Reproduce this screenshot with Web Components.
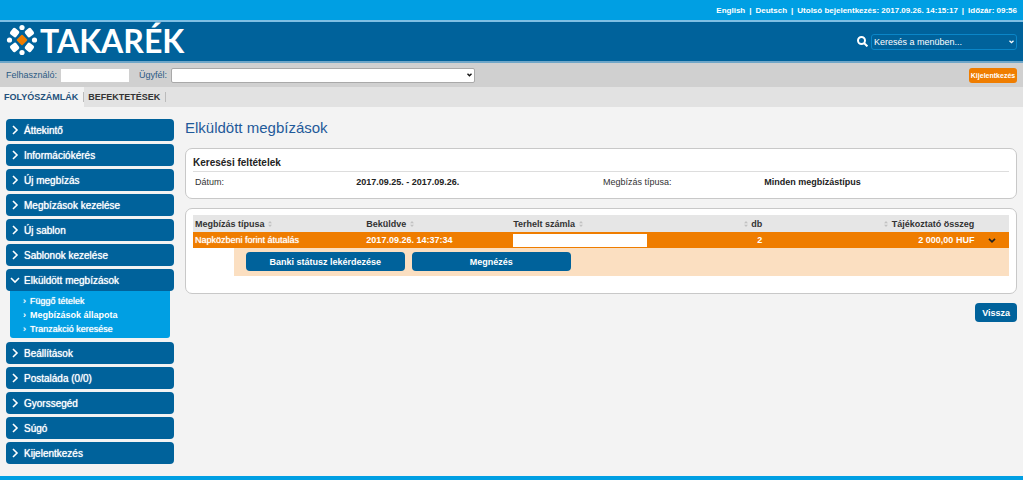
<!DOCTYPE html>
<html lang="hu">
<head>
<meta charset="utf-8">
<title>Takarék – Elküldött megbízások</title>
<style>
html, body { margin: 0; }
body { background: #f3f3f3; color: #333; font-family: "Liberation Sans", Arial, sans-serif; font-size: 9px;
  --navy: #00629b; --sky: #009fe3; --orange: #ef7d00; }
</style>
</head>
<body>
<bank-page>
  <top-bar slot="header"></top-bar>
  <brand-bar slot="header"></brand-bar>
  <client-bar slot="header"></client-bar>
  <tab-bar slot="header"></tab-bar>
  <side-menu slot="menu">
    <menu-item>Áttekintő</menu-item>
    <menu-item>Információkérés</menu-item>
    <menu-item>Új megbízás</menu-item>
    <menu-item>Megbízások kezelése</menu-item>
    <menu-item>Új sablon</menu-item>
    <menu-item>Sablonok kezelése</menu-item>
    <menu-item open>Elküldött megbízások
      <sub-item slot="sub">Függő tételek</sub-item>
      <sub-item slot="sub" current>Megbízások állapota</sub-item>
      <sub-item slot="sub">Tranzakció keresése</sub-item>
    </menu-item>
    <menu-item>Beállítások</menu-item>
    <menu-item>Postaláda (0/0)</menu-item>
    <menu-item>Gyorssegéd</menu-item>
    <menu-item>Súgó</menu-item>
    <menu-item>Kijelentkezés</menu-item>
  </side-menu>
  <page-title>Elküldött megbízások</page-title>
  <panel-card><search-criteria></search-criteria></panel-card>
  <panel-card><order-table></order-table></panel-card>
  <page-actions><action-button>Vissza</action-button></page-actions>
</bank-page>

<script>
function define(name, html) {
  const template = document.createElement('template');
  template.innerHTML = html;
  customElements.define(name, class extends HTMLElement {
    constructor() {
      super();
      this.attachShadow({ mode: 'open' }).append(template.content.cloneNode(true));
    }
  });
}

define('bank-page', `
<style>
:host { display: flex; flex-direction: column; min-height: 100vh; }
.body { flex: 1; display: grid; grid-template-columns: 168px minmax(0, 1fr); gap: 11px; padding: 12px 6px; }
main { display: flex; flex-direction: column; gap: 9px; }
footer { height: 4px; background: var(--sky); }
</style>
<header><slot name="header"></slot></header>
<div class="body"><slot name="menu"></slot><main><slot></slot></main></div>
<footer></footer>`);

define('top-bar', `
<style>
:host { display: flex; justify-content: flex-end; align-items: center; gap: 4px; height: 20px; padding: 0 6px;
  background: var(--sky); color: #fff; font-weight: bold; font-size: 8px; }
a { color: inherit; text-decoration: none; }
</style>
<a href="#en">English</a><span>|</span><a href="#de">Deutsch</a><span>|</span><span>Utolsó bejelentkezés: 2017.09.26. 14:15:17</span><span>|</span><span>Időzár: 09:56</span>`);

define('brand-bar', `
<style>
:host { display: flex; justify-content: space-between; align-items: center; height: 39px; padding: 0 6px;
  background: var(--navy); border-top: 2px solid #7fbfe4; border-bottom: 2px solid #6fa6c8; }
.logo { display: flex; align-items: center; gap: 2px; color: #fff; text-decoration: none; font: bold 32px/36px Lato, sans-serif; }
.logo svg { width: 32px; height: 32px; padding-bottom: 3px; }
.logo span { padding-bottom: 2px; }
.search { display: flex; align-items: center; gap: 3px; }
.search svg { width: 11px; height: 11px; }
.box { display: grid; align-items: center; }
select { grid-area: 1/1; appearance: none; width: 146px; height: 16px; padding: 0 2px; margin: 0; border: 1px solid #0a86c8; border-radius: 3px;
  background: transparent; color: #fff; font: 9px "Liberation Sans", Arial, sans-serif; }
.search .box svg { grid-area: 1/1; justify-self: end; width: 5px; height: 4px; margin-right: 3px; pointer-events: none; }
</style>
<a class="logo" href="#home">
<svg viewBox="0 0 32 32" fill="#fff" aria-hidden="true">
<rect x="12" y="12" width="8" height="8" rx="1" transform="rotate(45 16 16)" fill="#ef7d00"/>
<g id="petals">
<rect x="4.700" y="4.700" width="7.800" height="7.800" rx="2" transform="rotate(38 8.600 8.600)"/>
<rect x="19.500" y="4.700" width="7.800" height="7.800" rx="2" transform="rotate(-38 23.400 8.600)"/>
<rect x="4.700" y="19.500" width="7.800" height="7.800" rx="2" transform="rotate(-38 8.600 23.400)"/>
<rect x="19.500" y="19.500" width="7.800" height="7.800" rx="2" transform="rotate(38 23.400 23.400)"/>
</g>
<circle cx="16" cy="3.500" r="2.600"/><circle cx="16" cy="28.500" r="2.600"/><circle cx="3.500" cy="16" r="2.600"/><circle cx="28.500" cy="16" r="2.600"/>
</svg><span>TAKARÉK</span></a>
<div class="search">
<svg viewBox="0 0 11 11" fill="none" stroke="#fff" stroke-width="2" aria-hidden="true"><circle cx="4.500" cy="4.500" r="3.500"/><path d="M7 7l3.400 3.400"/></svg>
<div class="box"><select aria-label="Keresés a menüben"><option>Keresés a menüben...</option></select>
<svg viewBox="0 0 5 4" fill="none" stroke="#fff" stroke-width="1.300" aria-hidden="true"><path d="M.5 .7l2 2 2-2"/></svg></div>
</div>`);

define('client-bar', `
<style>
:host { display: flex; align-items: center; gap: 10px; height: 24px; padding: 0 6px; background: #d0d0d0; color: #2b5a84; }
label { display: flex; align-items: center; gap: 4px; }
input { box-sizing: border-box; width: 68px; height: 13px; margin: 0; padding: 0 2px; border: 0; background: #fff; font: inherit; }
.box { display: grid; align-items: center; }
select { grid-area: 1/1; box-sizing: border-box; appearance: none; width: 304px; height: 15px; margin: 0; border: 1px solid #a9a9a9; border-radius: 2px; background: #fff; font: inherit; }
svg { grid-area: 1/1; justify-self: end; width: 5px; height: 4px; margin-right: 3px; pointer-events: none; }
button { margin: 0 0 0 auto; width: 48px; height: 15px; padding: 0; border: 0; border-radius: 3px; background: var(--orange); color: #fff;
  font: bold 7px "Liberation Sans", Arial, sans-serif; }
</style>
<label>Felhasználó: <input type="text"></label>
<label>Ügyfél: <span class="box"><select><option></option></select>
<svg viewBox="0 0 5 4" fill="none" stroke="#111" stroke-width="1.400" aria-hidden="true"><path d="M.5 .7l2 2 2-2"/></svg></span></label>
<button type="button">Kijelentkezés</button>`);

define('tab-bar', `
<style>
:host { display: flex; height: 20px; background: #e2e2e2; font-weight: bold; line-height: 20px; }
a { padding: 0 6px 0 4px; color: #333; text-decoration: none; background: linear-gradient(#bbb, #bbb) right center / 1px 10px no-repeat; }
a[aria-current] { background-color: #f3f3f3; color: #24517b; }
</style>
<a href="#accounts" aria-current="page">FOLYÓSZÁMLÁK</a><a href="#investments">BEFEKTETÉSEK</a>`);

define('side-menu', `
<style>:host { display: flex; flex-direction: column; gap: 3px; }</style>
<slot></slot>`);

define('menu-item', `
<style>
:host { display: block; }
a { display: flex; align-items: center; gap: 6px; height: 22px; padding: 0 6px; border-radius: 4px; background: var(--navy); color: #fff;
  text-decoration: none; font-size: 10px; text-shadow: 0 0 1px #fff; }
svg { width: 6px; height: 8px; flex: none; overflow: visible; }
:host([open]) svg { transform: rotate(90deg); }
.sub { display: none; }
:host([open]) .sub { display: block; margin: 0 4px 1px; padding: 3px 13px 2px; background: var(--sky); border-radius: 0 0 3px 3px; }
</style>
<a href="#menu"><svg viewBox="0 0 6 8" fill="none" stroke="#fff" stroke-width="1.600" aria-hidden="true"><path d="M1 0l4 4-4 4"/></svg><span><slot></slot></span></a>
<div class="sub"><slot name="sub"></slot></div>`);

define('sub-item', `
<style>
:host { display: block; line-height: 14px; font-size: 9px; text-shadow: 0 0 1px #fff; }
:host([current]) { font-weight: bold; text-shadow: none; }
a { display: flex; gap: 4px; color: #fff; text-decoration: none; }
</style>
<a href="#sub"><span>›</span><span><slot></slot></span></a>`);

define('page-title', `
<style>h1 { margin: 0 0 2px; color: #1f5a9a; font-weight: normal; font-size: 15px; line-height: 18px; }</style>
<h1><slot></slot></h1>`);

define('panel-card', `
<style>:host { display: block; padding: 6px 7px; background: #fff; border: 1px solid #c8c8c8; border-radius: 7px; }</style>
<slot></slot>`);

define('search-criteria', `
<style>
h2 { margin: 0; font-size: 10px; line-height: 16px; color: #222; border-bottom: 1px solid #ddd; }
dl { display: grid; grid-template-columns: 2fr 3fr 2fr 3fr; margin: 0; line-height: 20px; }
dt { padding: 0 2px; }
dd { margin: 0; font-weight: bold; color: #222; }
</style>
<h2>Keresési feltételek</h2>
<dl><dt>Dátum:</dt><dd>2017.09.25. - 2017.09.26.</dd><dt>Megbízás típusa:</dt><dd>Minden megbízástípus</dd></dl>`);

define('sort-mark', `
<style>:host { display: inline-block; } svg { display: block; width: 4px; height: 6px; }</style>
<svg viewBox="0 0 4 6" fill="#c2c2c2" aria-hidden="true"><path d="M2 0l2 2.300H0zM2 6l2-2.300H0z"/></svg>`);

define('action-button', `
<style>
:host { display: block; }
button { width: 100%; height: 19px; margin: 0; padding: 0 7px; border: 0; border-radius: 4px; background: var(--navy); color: #fff;
  font: bold 9px "Liberation Sans", Arial, sans-serif; }
</style>
<button type="button"><slot></slot></button>`);

define('order-table', `
<style>
:host { display: block; padding-bottom: 11px; }
table { width: 100%; table-layout: fixed; border-collapse: collapse; }
th, td { box-sizing: border-box; padding: 0 2px; text-align: left; font-weight: bold; }
th { height: 17px; background: #e6e6e6; color: #333; }
.row td { height: 16px; background: var(--orange); color: #fff; }
.row td:first-child { font-weight: normal; text-shadow: 0 0 1px #fff; }
th.num, .row td.num { text-align: right; }
.type { width: 21%; } .sent { width: 18%; } .account { width: 20%; } .amount { width: 26%; } .more { width: 4%; }
sort-mark { margin: 0 1px; }
.blank { display: block; width: 134px; height: 13px; background: #fff; }
.row .more { padding: 0 12px; }
.more svg { display: block; width: 8px; height: 5px; }
.detail td { padding: 0 0 0 5%; }
.tools { display: flex; gap: 7px; padding: 4px 12px 5px; background: #fbdfc1; }
.tools action-button { width: 159px; }
</style>
<table>
<thead><tr><th class="type">Megbízás típusa <sort-mark></sort-mark></th><th class="sent">Beküldve <sort-mark></sort-mark></th>
<th class="account">Terhelt számla <sort-mark></sort-mark></th><th class="num"><sort-mark></sort-mark> db</th>
<th class="num amount"><sort-mark></sort-mark> Tájékoztató összeg</th><th class="more"></th></tr></thead>
<tbody>
<tr class="row"><td>Napközbeni forint átutalás</td><td>2017.09.26. 14:37:34</td><td><span class="blank"></span></td>
<td class="num">2</td><td class="num">2 000,00 HUF</td>
<td class="more"><svg viewBox="0 0 8 5" fill="none" stroke="#222" stroke-width="1.700" aria-hidden="true"><path d="M1 .8l3 3 3-3"/></svg></td></tr>
<tr class="detail"><td colspan="6"><div class="tools"><action-button>Banki státusz lekérdezése</action-button><action-button>Megnézés</action-button></div></td></tr>
</tbody>
</table>`);

define('page-actions', `
<style>:host { display: flex; justify-content: flex-end; }</style>
<slot></slot>`);
</script>
</body>
</html>
